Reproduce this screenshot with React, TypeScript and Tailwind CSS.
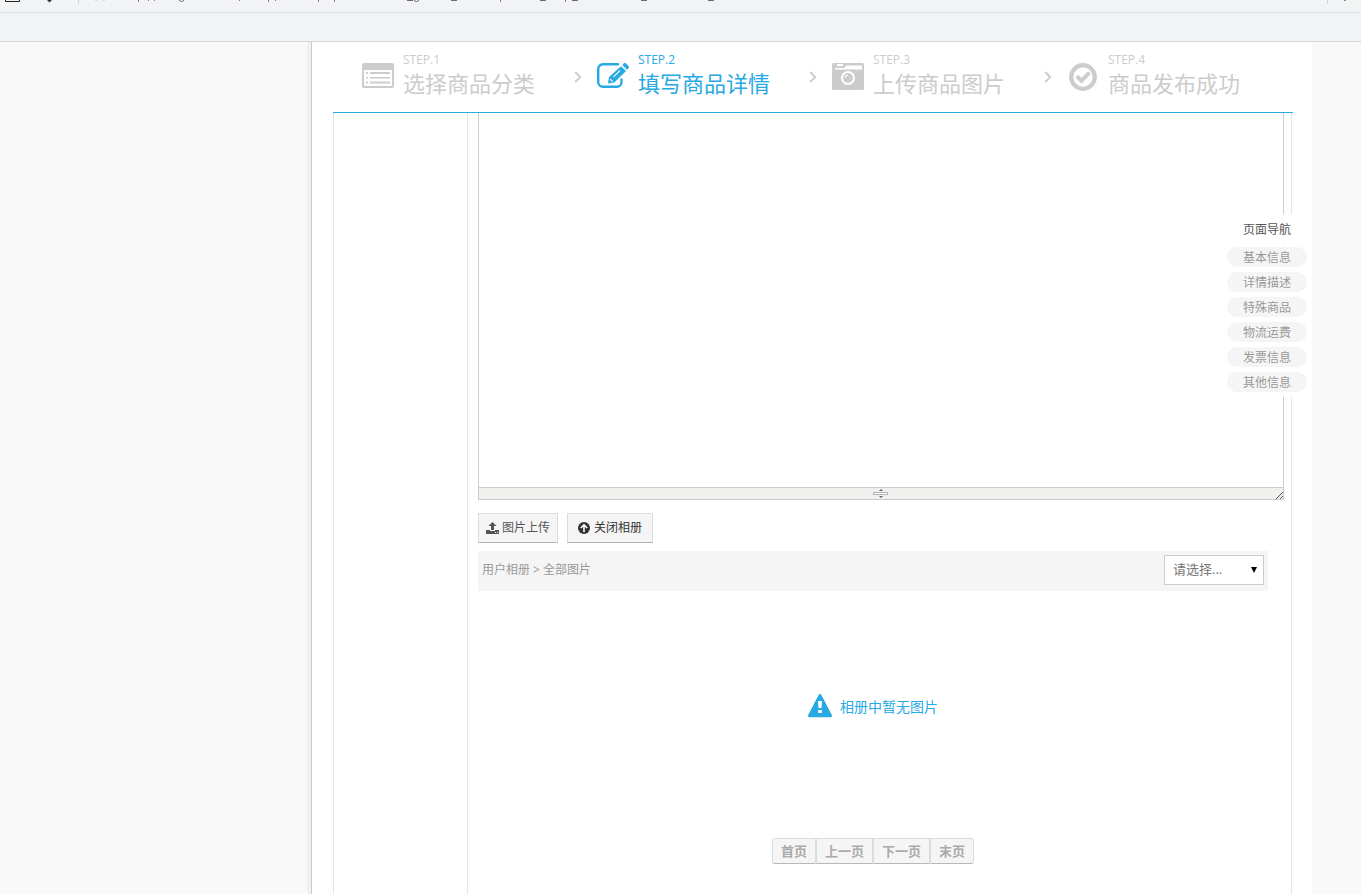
import React from 'react';

type StepIcon = 'list' | 'edit' | 'camera' | 'check';

const steps: { no: string; title: string; icon: StepIcon; active?: boolean }[] = [
  { no: 'STEP.1', title: '选择商品分类', icon: 'list' },
  { no: 'STEP.2', title: '填写商品详情', icon: 'edit', active: true },
  { no: 'STEP.3', title: '上传商品图片', icon: 'camera' },
  { no: 'STEP.4', title: '商品发布成功', icon: 'check' },
];

const sections = ['基本信息', '详情描述', '特殊商品', '物流运费', '发票信息', '其他信息'];
const pages = ['首页', '上一页', '下一页', '末页'];

function Glyph({ name }: { name: StepIcon }) {
  if (name === 'list') {
    return (
      <svg className="w-8 h-7" viewBox="0 0 32 28" fill="currentColor">
        <path
          fillRule="evenodd"
          d="M2 0h28a2 2 0 0 1 2 2v21a2 2 0 0 1-2 2H2a2 2 0 0 1-2-2V2a2 2 0 0 1 2-2zM2 7v15a1 1 0 0 0 1 1h26a1 1 0 0 0 1-1V7z"
        />
        <path d="M4 9h2v2H4zM8 9h20v2H8zM4 14h2v1.500H4zM8 14h20v1.500H8zM4 18.500h2v2H4zM8 18.500h20v2H8z" />
      </svg>
    );
  }
  if (name === 'edit') {
    return (
      <svg className="w-8 h-7" viewBox="0 0 32 28">
        <path
          d="M21 1.200H6A4.800 4.800 0 0 0 1.200 6v13A4.800 4.800 0 0 0 6 23.800h14a4.500 4.500 0 0 0 4.500-4.500V16.500"
          fill="none"
          stroke="currentColor"
          strokeWidth="2.400"
          strokeLinecap="round"
        />
        <path d="M11 20.500l1-6.500L24 3.200l5 4.800L17.300 19.500z" fill="currentColor" />
        <path d="M25.200 2l1.500-1.500a1.600 1.600 0 0 1 2.300 0l2.500 2.500a1.600 1.600 0 0 1 0 2.300L30.200 6.800z" fill="currentColor" />
        <path d="M16.500 13.800L23 7.600M13.200 16.200l2.300 2.300" stroke="#fff" strokeWidth="1.100" />
      </svg>
    );
  }
  if (name === 'camera') {
    return (
      <svg className="w-8 h-7" viewBox="0 0 32 28">
        <rect width="32" height="27" rx="1.500" fill="currentColor" />
        <path d="M3 5h9l2.500-2.500H30v4H3z" fill="#fff" />
        <rect x="5" y="1" width="6" height="2" fill="#fff" />
        <circle cx="16" cy="15" r="7" fill="#fff" />
        <circle cx="16" cy="15" r="5" fill="currentColor" />
        <path d="M13 15a3 3 0 0 1 3-3" fill="none" stroke="#fff" />
      </svg>
    );
  }
  return (
    <svg className="w-7 h-7" viewBox="0 0 28 28" fill="none" stroke="currentColor">
      <circle cx="14" cy="14" r="11.800" strokeWidth="4.200" />
      <path d="M7.800 13.200l4.700 4.500 8-8" strokeWidth="4" />
    </svg>
  );
}

function Step({ no, title, icon, active, last }: (typeof steps)[number] & { last: boolean }) {
  return (
    <li className={`relative flex w-[235px] shrink-0 gap-[9px] ${active ? 'text-[#27a9e3]' : 'text-[#cccccc]'}`}>
      <div className="mt-[21px] flex w-8 shrink-0 justify-center self-start">
        <Glyph name={icon} />
      </div>
      <div className="pt-2.5">
        <div className="text-[12px] leading-4">{no}</div>
        <h2 className="text-[22px] leading-[30px] whitespace-nowrap">{title}</h2>
      </div>
      {!last && (
        <svg className="absolute top-[29px] left-[212px] h-3 w-2 text-[#cccccc]" viewBox="0 0 8 12" fill="none" stroke="currentColor" strokeWidth="1.800">
          <path d="M1.200 1l5 5-5 5" />
        </svg>
      )}
    </li>
  );
}

// lower edge of the scrolled-away toolbar
function ToolbarEdge() {
  return (
    <div className="relative h-[13px] shrink-0 border-b border-[#dcdddf]">
      <svg className="absolute top-0 left-0 h-3 w-[720px]" viewBox="0 0 720 12">
        <path d="M5.500 0v1.500h14V0" fill="none" stroke="#222" />
        <path d="M47 0h5l-2.500 2.500z" fill="#333" />
        <path d="M78.500 0v4" stroke="#cfd1d4" />
        <path d="M95 .5h2M103 .5h2" stroke="#d5d7d9" />
        <path
          d="M138.500 0v2M148.500 0v1M154.500 0v1M239.500 0v1M268.500 0v2M275.500 0v1M318.500 0v2M334.500 0v2M500.500 0v2M565.500 0v2"
          stroke="#8b7b7a"
        />
        <path d="M179 .5q2.500 2 5 0M407 .5h6M414 .5q2.500 2 5 0M451 .5h6M540 .5h6M572 .5h6M641 .5h6M708 .5h6" fill="none" stroke="#6b6b70" />
      </svg>
      <svg className="absolute top-0 right-0 h-3 w-9" viewBox="0 0 36 12">
        <path d="M2.500 0v4" stroke="#cfd1d4" />
        <path d="M19 .5h2" stroke="#5aa84f" />
      </svg>
    </div>
  );
}

function PageNav() {
  return (
    <nav className="absolute top-[172px] right-0 w-[90px] bg-white/90 px-[5px] pt-1.5 pb-[5px] text-center text-[12px]">
      <h3 className="mb-[7px] leading-5 text-[#555555]">页面导航</h3>
      <ul className="flex flex-col gap-[5px]">
        {sections.map((s) => (
          <li key={s}>
            <a href="#" className="block h-5 rounded-full bg-[#f5f5f5] leading-[21px] text-[#999999]">
              {s}
            </a>
          </li>
        ))}
      </ul>
    </nav>
  );
}

function Editor() {
  return (
    <div className="border border-t-0 border-[#cccccc]">
      <textarea aria-label="商品描述" className="block h-[374px] w-full resize-none outline-none" />
      <div className="relative flex h-3 items-center justify-center border-t border-[#cccccc] bg-[#f0f0ee]">
        <svg className="h-2.5 w-4" viewBox="0 0 16 10">
          <path d="M6 2l2-2 2 2zM6 7l2 2 2-2z" fill="#666" />
          <rect x=".5" y="3.500" width="14" height="2" fill="#fff" stroke="#b5b5b5" />
        </svg>
        <svg className="absolute right-0 bottom-0 h-2 w-2" viewBox="0 0 8 8" stroke="#555">
          <path d="M1 8l7-7M5 8l3-3" />
        </svg>
      </div>
    </div>
  );
}

function Album() {
  return (
    <section className="mt-2 mr-4">
      <div className="flex h-10 items-start justify-between bg-[#f5f5f5] px-1 pt-1">
        <p className="text-[12px] leading-[30px] text-[#999999]">用户相册 &gt; 全部图片</p>
        <div className="relative">
          <select
            aria-label="选择相册"
            className="block h-[30px] w-[100px] appearance-none border border-[#cccccc] bg-white pl-2 text-[13px] text-[#777777]"
          >
            <option>请选择...</option>
          </select>
          <svg className="pointer-events-none absolute top-3 right-1.5 h-1.5 w-2" viewBox="0 0 8 6">
            <path d="M1 0h6L4 6z" fill="#000" />
          </svg>
        </div>
      </div>
      <div className="flex h-[230px] items-center justify-center gap-2 text-[#27a9e3]">
        <svg className="h-6 w-6" viewBox="0 0 24 24">
          <path d="M10.700.8a1.500 1.500 0 0 1 2.600 0l10.500 20.200a1.500 1.500 0 0 1-1.300 2.200h-21A1.500 1.500 0 0 1 .2 21z" fill="currentColor" />
          <path d="M10 7h4l-.5 7h-3zM10.200 16h3.600v3h-3.600z" fill="#fff" />
        </svg>
        <p className="pt-0.5 text-[14px] leading-5">相册中暂无图片</p>
      </div>
      <div className="mt-[17px] flex justify-center">
        {pages.map((p) => (
          <button
            key={p}
            disabled
            className="h-[26px] border border-[#dcdcdc] border-b-[#b8b8b8] bg-[#f5f5f5] px-2 text-[13px] leading-6 font-bold text-[#aaaaaa] first:rounded-l-[3px] last:rounded-r-[3px]"
          >
            {p}
          </button>
        ))}
      </div>
    </section>
  );
}

export default function App() {
  return (
    <div className="flex min-h-screen flex-col bg-[#f2f3f5] font-['Open_Sans','Noto_Sans_CJK_SC',sans-serif]">
      <ToolbarEdge />
      <div className="h-[29px] shrink-0 border-b border-[#d6d7d9]" />

      <div className="flex flex-1 bg-[#f9f9f9]">
        <aside className="w-[312px] shrink-0 border-r border-[#cccccc]">
          <div className="ml-auto h-full w-1 bg-[#f0f0f0]" />
        </aside>

        <main className="relative mr-[49px] flex min-w-0 flex-1 flex-col bg-white pr-[19px] pl-[21px]">
          <ol className="flex h-[71px] shrink-0 border-b border-[#27a9e3] pl-[29px]">
            {steps.map((s, i) => (
              <Step key={s.no} {...s} last={i === steps.length - 1} />
            ))}
          </ol>

          <div className="mr-px flex flex-1 border-x border-[#e6e6e6]">
            <div className="w-[134px] shrink-0 border-r border-[#e6e6e6]" />
            <div className="min-w-0 flex-1 pr-[7px] pb-[30px] pl-2.5">
              <Editor />
              <div className="mt-[13px] flex gap-[9px] text-[12px]">
                <button className="flex h-[30px] w-20 items-center justify-center gap-[3px] border border-[#dcdcdc] border-b-[#b3b3b3] bg-[#f5f5f5] text-[#555555]">
                  <svg className="h-3 w-[13px]" viewBox="0 0 13 12" fill="currentColor">
                    <path d="M6.500 0l4 4H8v4H5V4H2.500z" />
                    <path d="M0 8h4v1h5V8h4v4H0z" />
                    <path d="M9 10h1v1H9zM11 10h1v1h-1z" fill="#fff" />
                  </svg>
                  图片上传
                </button>
                <button className="flex h-[30px] w-[86px] items-center justify-center gap-1 border border-[#dcdcdc] border-b-[#b3b3b3] bg-[#f5f5f5] text-[#333333]">
                  <svg className="h-3 w-3" viewBox="0 0 12 12">
                    <circle cx="6" cy="6" r="6" fill="currentColor" />
                    <path d="M2.800 6L6 2.800 9.200 6M6 3.500V10" fill="none" stroke="#fff" strokeWidth="1.600" />
                  </svg>
                  关闭相册
                </button>
              </div>
              <Album />
            </div>
          </div>

          <PageNav />
        </main>
      </div>
    </div>
  );
}
